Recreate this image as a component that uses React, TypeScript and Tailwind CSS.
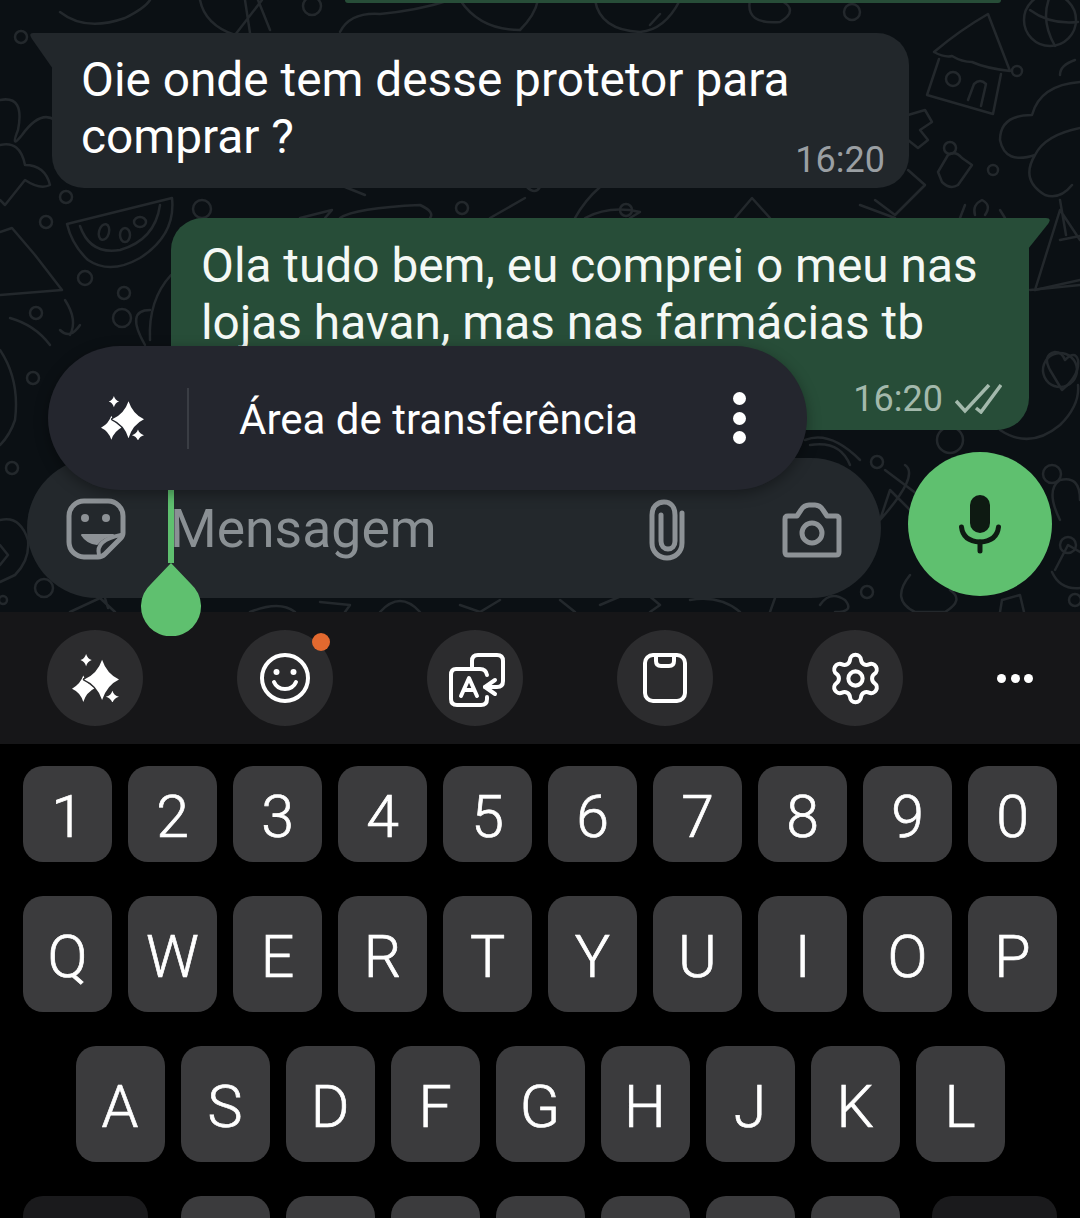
import React from 'react';
import { Settings } from 'lucide-react';

const Doodles = () => (
  <svg className="absolute inset-0 w-full h-full" viewBox="0 0 1080 612" fill="none" stroke="#23282c" strokeWidth="2.5" strokeLinecap="round" strokeLinejoin="round">
    {/* top row */}
    <path d="M60 12 Q85 32 125 18 Q145 8 150 0 M200 0 Q205 25 235 35 L262 0 M270 30 L258 0 M250 33 L245 0" />
    <circle cx="312" cy="6" r="9" />
    <circle cx="21" cy="37" r="6" />
    <path d="M340 32 Q350 12 380 14 Q420 10 450 0 M460 0 Q480 30 520 30 Q535 15 538 0" />
    <path d="M595 0 Q600 30 640 32 Q665 30 680 0 M650 25 L660 14" />
    <path d="M750 0 Q745 25 780 22 Q800 10 780 0" />
    <circle cx="852" cy="12" r="8" />
    {/* house */}
    <path d="M988 14 L1010 71 M988 14 Q960 30 934 52 M934 52 Q945 58 952 56 Q962 62 972 62 Q985 68 1010 71" />
    <path d="M939 59 L927 95 L993 114 L1001 74" />
    <circle cx="953" cy="79" r="7" />
    <path d="M968 100 L974 84 Q980 78 986 84 L981 106" />
    <circle cx="1050" cy="20" r="26" />
    <path d="M1030 10 Q1050 25 1078 22 M1050 -4 Q1040 20 1055 46" />
    <circle cx="1017" cy="71" r="5" />
    <path d="M1075 60 Q1060 65 1060 75" />
    {/* flower */}
    <path d="M1080 82 Q1040 85 1032 115 Q1000 115 1000 140 Q1005 165 1035 155 Q1020 180 1045 195 Q1060 200 1072 185 M1035 155 Q1045 135 1080 128" />
    <path d="M1060 200 L1066 235 M1035 290 L1060 210 L1080 240 M1030 290 L1080 285" />
    {/* lock + cross beside bubble */}
    <path d="M908 115 L925 110 L932 122 L920 130 L928 140 L918 148 L908 140" />
    <path d="M938 172 L948 155 Q955 150 962 158 L972 165 L958 185 Q950 190 942 182 Z" />
    <circle cx="950" cy="148" r="6" />
    <circle cx="993" cy="170" r="5" />
    <path d="M908 170 L925 185 L895 215 L875 200" />
    <path d="M975 215 Q972 205 982 200 Q992 205 985 215" />
    <path d="M960 218 L965 205 M1005 218 L1000 210" />
    {/* below bubble 1 */}
    <path d="M345 187 L365 195 M340 218 Q355 208 420 205 Q435 212 430 218" />
    <path d="M300 218 L332 210 L325 218" />
    <circle cx="462" cy="208" r="6" />
    <circle cx="202" cy="209" r="9" />
    <path d="M490 218 L525 198 M527 187 Q535 195 540 187" />
    <path d="M585 218 Q610 205 640 212 L630 218 M600 187 Q585 200 575 218" />
    <circle cx="626" cy="210" r="6" />
    <path d="M735 218 L752 198 L770 218 M860 205 L895 218" />
    {/* watermelon */}
    <path d="M67 224 L172 198 Q176 235 140 258 Q110 275 88 260 Q72 245 67 224 Z" />
    <path d="M80 226 Q90 255 120 250 Q155 240 160 205" />
    <ellipse cx="104" cy="232" rx="5" ry="8" transform="rotate(15 104 232)" />
    <ellipse cx="125" cy="235" rx="5" ry="7" />
    <ellipse cx="140" cy="222" rx="6" ry="5" />
    <circle cx="46" cy="222" r="6" />
    <circle cx="66" cy="197" r="6" />
    {/* left edge */}
    <path d="M0 100 Q25 95 18 130 Q10 150 22 135 Q40 110 55 120 M0 145 Q20 140 25 165 Q45 165 50 185 Q40 190 25 180 L5 205 L0 200" />
    <path d="M0 232 L12 228 L35 255 L62 290 L0 295" />
    <circle cx="85" cy="278" r="7" />
    <circle cx="124" cy="293" r="6" />
    <circle cx="122" cy="318" r="9" />
    <circle cx="36" cy="313" r="6" />
    <path d="M150 340 Q148 300 171 275 M65 300 Q78 320 70 335 M60 330 Q70 340 80 325 M10 318 Q35 325 50 345" />
    <path d="M0 350 Q20 380 15 420 Q10 435 0 445" />
    <circle cx="33" cy="378" r="6" />
    <circle cx="12" cy="468" r="6" />
    <path d="M0 520 Q20 515 28 540 Q30 560 15 575 L0 582 M0 565 L8 555 L0 545" />
    <circle cx="44" cy="588" r="9" />
    <circle cx="3" cy="600" r="4" />
    <path d="M70 612 L100 598 L115 612 M105 598 L108 608" />
    {/* below input */}
    <path d="M250 612 Q280 600 295 612 M320 602 L350 605 L345 612 M380 612 Q400 590 420 612 M460 605 L480 612 L500 600" />
    <path d="M560 600 L575 612 M600 605 L640 588 L660 605 L650 612 M690 600 Q720 595 740 612 M770 612 L775 598" />
    <path d="M820 605 Q830 590 845 600 Q855 612 835 612" />
    {/* right of outgoing */}
    <path d="M1060 240 L1080 236 M1035 290 L1080 280" />
    <circle cx="1060" cy="370" r="17" transform="rotate(20 1060 370)" />
    <path d="M1050 370 Q1042 355 1055 352 Q1062 352 1065 360 Q1075 350 1078 360 Q1080 375 1062 390 Z" />
    <path d="M1000 430 Q1030 450 1060 425 Q1080 405 1078 385" />
    <circle cx="950" cy="440" r="13" />
    <circle cx="1052" cy="474" r="9" />
    <circle cx="877" cy="462" r="6" />
    <path d="M905 465 Q920 475 880 520 L890 490 L910 510 M885 470 L925 500" />
    <path d="M810 445 Q840 440 850 465 M805 440 Q830 430 860 460" />
    <path d="M1060 520 Q1045 490 1060 480 Q1080 475 1080 500 M1055 570 L1068 545 L1080 552 M1052 572 Q1060 590 1080 588" />
    <circle cx="1068" cy="545" r="8" />
    <path d="M910 575 Q890 600 915 612 L945 612 Q965 600 950 590" />
    <circle cx="867" cy="592" r="6" />
    <path d="M1000 612 L1002 600 L1020 595 L1024 612" />
    <circle cx="1075" cy="600" r="6" />
    <path d="M145 345 Q125 310 150 310" />
  </svg>
);

const Sparkles = ({ size, gap }: { size: number; gap: string }) => (
  <svg width={size} height={size * 1.04} viewBox="0 0 50 52" fill="#fff">
    <path d="M12 23 Q15 32 25 36 Q15 41 12 51 Q9 41 0 37 Q9 32 12 23Z" />
    <path d="M32 6 Q37 21 50 27 Q37 33 32 49 Q27 33 13 27 Q27 21 32 6Z" stroke={gap} strokeWidth="3" paintOrder="stroke" strokeLinejoin="round" />
    <path d="M15 0 Q16.500 5 21 6.500 Q16.500 8 15 13 Q13.500 8 9 6.500 Q13.500 5 15 0Z" />
    <path d="M43 39 Q44.500 44 50 45.500 Q44.500 47 43 52 Q41.500 47 36 45.500 Q41.500 44 43 39Z" />
  </svg>
);

const StickerIcon = () => (
  <svg width="60" height="62" viewBox="0 0 60 62" fill="none" stroke="#8d9296" strokeWidth="5" strokeLinejoin="round" strokeLinecap="round">
    <path d="M18 3 H42 A15 15 0 0 1 57 18 V35 Q57 38 54 41 L39 56 Q36 59 32 59 H18 A15 15 0 0 1 3 44 V18 A15 15 0 0 1 18 3Z" />
    <circle cx="19" cy="20" r="4" fill="#8d9296" stroke="none" />
    <circle cx="40" cy="20" r="4" fill="#8d9296" stroke="none" />
    <path d="M16 37 H47 Q37 38 31 46 Q21 45 16 37Z" fill="#8d9296" strokeWidth="2" />
    <path d="M33 57 Q29 42 55 37" strokeWidth="4" />
  </svg>
);

const ClipIcon = () => (
  <svg width="38" height="62" viewBox="0 0 38 62" fill="none" stroke="#8d9296" strokeWidth="5" strokeLinecap="round">
    <path d="M34 14 V44 C34 53 27 59 19 59 C11 59 4 53 4 44 V16 C4 8 9 3 16 3 C23 3 27 8 27 16 V42 C27 47 24 50 20 50 C16 50 13 47 13 42 V16" />
  </svg>
);

const CameraIcon = () => (
  <svg width="60" height="56" viewBox="0 0 60 56" fill="none" stroke="#8d9296" strokeWidth="5" strokeLinejoin="round">
    <path d="M3 17 Q3 14 6 14 H15 L19 8 Q22 3 27 3 H33 Q38 3 41 8 L45 14 H54 Q57 14 57 17 V50 Q57 53 54 53 H6 Q3 53 3 50Z" />
    <circle cx="30" cy="31" r="10" />
  </svg>
);

const MicIcon = () => (
  <svg width="42" height="60" viewBox="0 0 42 60" fill="none">
    <rect x="11" y="1" width="20" height="38" rx="10" fill="#0e1a12" />
    <path d="M2.500 33 Q4 47 21 48 Q38 47 39.500 33" stroke="#0e1a12" strokeWidth="5" strokeLinecap="round" />
    <path d="M21 48 V57" stroke="#0e1a12" strokeWidth="5" strokeLinecap="round" />
  </svg>
);

const DoubleCheck = () => (
  <svg width="47" height="30" viewBox="0 0 47 30" fill="none" stroke="#a3b9ac" strokeWidth="3.500">
    <path d="M1 17 L10 27 L34 1" />
    <path d="M21 24 L26 28 L46 1" />
  </svg>
);

const SmileIcon = () => (
  <svg width="50" height="50" viewBox="0 0 50 50" fill="none" stroke="#fff" strokeWidth="4" strokeLinecap="round">
    <circle cx="25" cy="25" r="23" />
    <circle cx="16.500" cy="19" r="3" fill="#fff" stroke="none" />
    <circle cx="33.500" cy="19" r="3" fill="#fff" stroke="none" />
    <path d="M14 29 Q17 36 25 36 Q33 36 36 29" />
  </svg>
);

const TranslateIcon = () => (
  <svg className="ml-[4px] mt-[4px]" width="56" height="54" viewBox="0 0 56 54" fill="none" stroke="#fff" strokeWidth="4" strokeLinecap="round" strokeLinejoin="round">
    <path d="M23 14 V8 Q23 2 29 2 H48 Q54 2 54 8 V28 Q54 34 48 34 H36" />
    <path d="M7 16 H31 Q37 16 38 22 M38 44 V46 Q38 52 32 52 H8 Q2 52 2 46 V22 Q2 16 7 16" />
    <path d="M12 43 L20 25 L28 43 M15 37 H25" />
    <path d="M46 27 L36 34 L46 41" />
  </svg>
);

const ClipboardIcon = () => (
  <svg width="44" height="50" viewBox="0 0 44 50" fill="none" stroke="#fff" strokeWidth="4" strokeLinejoin="round">
    <rect x="2" y="2" width="40" height="46" rx="8" />
    <path d="M13 2 V8 Q13 13 18 13 H26 Q31 13 31 8 V2" />
  </svg>
);

const Key = ({ label, tall }: { label: string; tall?: boolean }) => (
  <div className={`w-[89px] rounded-[20px] bg-[#3b3b3d] flex items-center justify-center pt-[5px] text-white text-[59px] font-light [-webkit-text-stroke:0.7px_white] leading-none ${tall ? 'h-[116px]' : 'h-[96px]'}`}>
    {label}
  </div>
);

const ToolButton = ({ children }: { children: React.ReactNode }) => (
  <div className="relative w-[96px] h-[96px] rounded-full bg-[#2c2c2e] flex items-center justify-center">
    {children}
  </div>
);

export default function App() {
  return (
    <div className="relative w-[1080px] h-[1218px] overflow-hidden bg-black font-[Roboto,sans-serif]">
      {/* chat */}
      <div className="relative h-[612px] bg-[#0b1014]">
        <Doodles />
        <div className="absolute left-[345px] top-0 w-[656px] h-[3px] rounded-b-[3px] bg-[#274d38]" />

        <div className="relative flex flex-col pt-[33px]">
          <div className="relative ml-[52px] w-[857px] h-[155px] rounded-[32px] rounded-tl-none bg-[#22272b] pl-[29px] pt-[19px] text-[47.800px] leading-[57px] text-white">
            <svg className="absolute left-[-23px] top-0" width="24" height="36" viewBox="0 0 24 36" fill="#22272b">
              <path d="M24 0 H4 Q-1 0 3 6 L24 36Z" />
            </svg>
            <p>Oie onde tem desse protetor para<br />comprar ?</p>
            <span className="absolute right-[24px] bottom-[7px] text-[36px] leading-[42px] text-[#9a9fa3]">16:20</span>
          </div>

          <div className="relative mt-[30px] ml-[171px] w-[858px] h-[212px] rounded-[32px] rounded-tr-none bg-[#274d38] pl-[30px] pt-[20px] text-[47.800px] leading-[57px] text-[#f4f8f5]">
            <svg className="absolute right-[-22px] top-0" width="23" height="36" viewBox="0 0 23 36" fill="#274d38">
              <path d="M0 0 H18 Q24 0 20 6 L0 31Z" />
            </svg>
            <p>Ola tudo bem, eu comprei o meu nas<br />lojas havan, mas nas farmácias tb</p>
            <div className="absolute right-[27px] bottom-[10px] flex items-center gap-[12px]">
              <span className="text-[36px] leading-[42px] text-[#a3b9ac]">16:20</span>
              <DoubleCheck />
            </div>
          </div>

          <div className="relative flex items-start mt-[22px] ml-[27px]">
            <div className="mt-[6px] w-[854px] h-[140px] rounded-[70px] bg-[#23282c] flex items-center pl-[39px] pr-[39px]">
              <div className="mt-[2px]"><StickerIcon /></div>
              <span className="ml-[44px] mt-[2px] text-[53.500px] leading-none text-[#8a9094]">Mensagem</span>
              <div className="ml-auto mt-[4px]"><ClipIcon /></div>
              <div className="ml-[96px] mt-[4px]"><CameraIcon /></div>
            </div>
            <div className="ml-[27px] w-[144px] h-[144px] rounded-full bg-[#5fc06f] flex items-center justify-center">
              <MicIcon />
            </div>
          </div>
        </div>

        {/* caret + handle */}
        <div className="absolute left-[168px] top-[490px] w-[6px] h-[73px] bg-[#5fc06f]" />
        <svg className="absolute left-[140px] top-[562px] z-20" width="62" height="74" viewBox="0 0 62 74" fill="#5fc06f">
          <path d="M31 1 L51 22 A30 30 0 1 1 11 22Z" />
        </svg>

        {/* clipboard pill */}
        <div className="absolute left-[48px] top-[346px] z-10 w-[759px] h-[144px] rounded-[72px] bg-[#24262e] shadow-[0_4px_14px_rgba(0,0,0,0.35)] flex items-center text-white">
          <div className="ml-[53px]"><Sparkles size={43} gap="#24262e" /></div>
          <div className="ml-[43px] w-[2px] h-[61px] bg-[#3a3d44]" />
          <span className="ml-[50px] mt-[3px] text-[42px] leading-none">Área de transferência</span>
          <div className="ml-auto mr-[61px] flex flex-col gap-[6.500px]">
            <span className="w-[13px] h-[13px] rounded-full bg-white" />
            <span className="w-[13px] h-[13px] rounded-full bg-white" />
            <span className="w-[13px] h-[13px] rounded-full bg-white" />
          </div>
        </div>
      </div>

      {/* keyboard toolbar */}
      <div className="h-[132px] bg-[#161618] flex items-center pl-[47px] gap-[94px]">
        <ToolButton><Sparkles size={47} gap="#2c2c2e" /></ToolButton>
        <ToolButton>
          <SmileIcon />
          <span className="absolute right-[3px] top-[3px] w-[18px] h-[18px] rounded-full bg-[#e2692f]" />
        </ToolButton>
        <ToolButton><TranslateIcon /></ToolButton>
        <ToolButton><ClipboardIcon /></ToolButton>
        <ToolButton><Settings size={57} color="#fff" strokeWidth={1.700} /></ToolButton>
        <div className="w-[36px] flex justify-between">
          <span className="w-[9px] h-[9px] rounded-full bg-white" />
          <span className="w-[9px] h-[9px] rounded-full bg-white" />
          <span className="w-[9px] h-[9px] rounded-full bg-white" />
        </div>
      </div>

      {/* keyboard */}
      <div className="flex flex-col items-center gap-[34px] pt-[22px]">
        <div className="flex gap-[16px]">
          {['1', '2', '3', '4', '5', '6', '7', '8', '9', '0'].map((k) => <Key key={k} label={k} />)}
        </div>
        <div className="flex gap-[16px]">
          {['Q', 'W', 'E', 'R', 'T', 'Y', 'U', 'I', 'O', 'P'].map((k) => <Key key={k} label={k} tall />)}
        </div>
        <div className="flex gap-[16px]">
          {['A', 'S', 'D', 'F', 'G', 'H', 'J', 'K', 'L'].map((k) => <Key key={k} label={k} tall />)}
        </div>
        <div className="flex w-[1034px] justify-between">
          <div className="w-[125px] h-[116px] rounded-[20px] bg-[#1a1a1c]" />
          <div className="flex gap-[16px]">
            {[0, 1, 2, 3, 4, 5, 6].map((k) => <Key key={k} label="" tall />)}
          </div>
          <div className="w-[125px] h-[116px] rounded-[20px] bg-[#1a1a1c]" />
        </div>
      </div>
    </div>
  );
}
